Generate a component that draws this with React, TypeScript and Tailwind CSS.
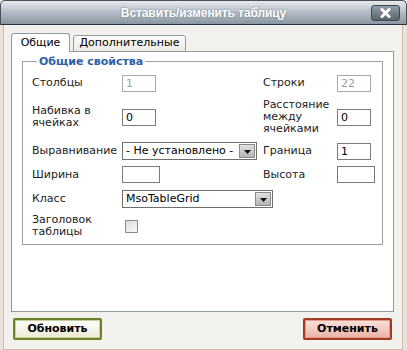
import React from "react";

function TextBox({ value = "", width = "w-[34px]", disabled = false }: { value?: string; width?: string; disabled?: boolean }) {
  return (
    <div
      className={`${width} h-[17px] border bg-white px-[3px] text-[11px] leading-[15px] ${
        disabled ? "border-[#a9a9a9] text-[#9a9a9a]" : "border-[#7b7b7b] text-black"
      }`}
    >
      {value}
    </div>
  );
}

function SelectBox({ value, width }: { value: string; width: string }) {
  return (
    <div className={`${width} h-[18px] border border-[#6f6f6f] bg-white flex items-center justify-between pl-[3px] pr-[1px]`}>
      <span className="text-[11px] leading-[14px] text-black whitespace-nowrap">{value}</span>
      <span className="w-[16px] h-[14px] bg-gradient-to-b from-[#e2e2e2] to-[#b4b4b4] border border-[#8a8a8a] flex items-end justify-center pb-[3px]">
        <svg width="7" height="4" viewBox="0 0 7 4">
          <path d="M0 0 H7 L3.5 4 Z" fill="#111" />
        </svg>
      </span>
    </div>
  );
}

const label = "text-[11px] leading-[12px] text-[#222] self-center";

export default function App() {
  return (
    <div className="w-[407px] h-[350px] bg-[#f3f1ee] flex flex-col font-['DejaVu_Sans',sans-serif] overflow-hidden">
      {/* Title bar */}
      <div className="h-[25px] shrink-0 rounded-t-[5px] border border-[#4a5259] border-b-[#2e3338] bg-gradient-to-b from-[#e6eaee] via-[#b3bcc6] to-[#8a96a2] flex items-center relative">
        <div className="flex-1 text-center text-white text-[12px] font-bold font-['Liberation_Sans',sans-serif] tracking-[-0.1px] [text-shadow:0_0_2px_#6b7784]">
          Вставить/изменить таблицу
        </div>
        <div className="absolute right-[6px] top-[4px] w-[29px] h-[16px] rounded-[3px] border border-[#3f4850] bg-gradient-to-b from-[#939da7] to-[#5a6570] flex items-center justify-center">
          <svg width="11" height="10" viewBox="0 0 11 10">
            <path d="M2 1.5 L9 8.5 M9 1.5 L2 8.5" stroke="#fff" strokeWidth="2.8" strokeLinecap="square" />
          </svg>
        </div>
      </div>

      {/* Body */}
      <div className="flex-1 flex flex-col border-l-[3px] border-r-[4px] border-[#ebe3da]">
        <div className="flex-1 flex flex-col border-x border-b border-[#cbbdaf] pt-[8px]">
          {/* Tabs */}
          <div className="flex items-end ml-[7px] h-[19px] gap-[3px] relative z-10">
            <div className="h-[19px] w-[59px] bg-white border border-[#919b9c] border-b-0 rounded-t-[3px] flex items-center justify-center text-[11px] text-black">
              Общие
            </div>
            <div className="h-[17px] w-[113px] bg-gradient-to-b from-[#fcfcfb] to-[#ecebe6] border border-[#919b9c] rounded-t-[3px] flex items-center justify-center text-[11px] text-black">
              Дополнительные
            </div>
          </div>

          {/* Panel */}
          <div className="ml-[7px] mr-[8px] -mt-px h-[261px] bg-white border border-[#919b9c] px-[10px] pt-[3px]">
            <fieldset className="border border-[#a0a0a0] pl-[9px] pt-[3px] pb-[3px]">
              <legend className="ml-[5px] px-[2px] text-[11px] leading-[13px] font-bold text-[#2b61a8]">
                Общие свойства
              </legend>
              <div className="grid grid-cols-[90px_141px_74px_1fr] grid-rows-[24px_44px_24px_23px_25px_30px]">
                <div className={label}>Столбцы</div>
                <div className="self-center"><TextBox value="1" disabled /></div>
                <div className={label}>Строки</div>
                <div className="self-center"><TextBox value="22" disabled /></div>

                <div className={label}>Набивка в<br />ячейках</div>
                <div className="self-center"><TextBox value="0" /></div>
                <div className={label}>Расстояние<br />между<br />ячейками</div>
                <div className="self-center"><TextBox value="0" /></div>

                <div className={label}>Выравнивание</div>
                <div className="self-center"><SelectBox value="- Не установлено -" width="w-[135px]" /></div>
                <div className={label}>Граница</div>
                <div className="self-center"><TextBox value="1" /></div>

                <div className={label}>Ширина</div>
                <div className="self-center"><TextBox width="w-[38px]" /></div>
                <div className={label}>Высота</div>
                <div className="self-center"><TextBox width="w-[38px]" /></div>

                <div className={label}>Класс</div>
                <div className="self-center col-span-3"><SelectBox value="MsoTableGrid" width="w-[151px]" /></div>

                <div className={label}>Заголовок<br />таблицы</div>
                <div className="self-center pl-[3px]">
                  <div className="w-[13px] h-[13px] border border-[#8c8c8c] bg-gradient-to-br from-[#dcdcdc] to-[#fafafa]" />
                </div>
                <div />
                <div />
              </div>
            </fieldset>
          </div>

          {/* Buttons */}
          <div className="flex justify-between pl-[9px] pr-[10px] mt-[6px]">
            <button className="w-[89px] h-[22px] rounded-[2px] border-2 border-[#6f7f2a] bg-gradient-to-b from-[#ffffff] to-[#ece9d2] text-[11px] font-bold text-black shadow-[inset_0_0_0_1px_#c7cf9a]">
              Обновить
            </button>
            <button className="w-[89px] h-[22px] rounded-[2px] border-2 border-[#a23b22] bg-gradient-to-b from-[#fbe3dc] to-[#e9b2a6] text-[11px] font-bold text-black shadow-[inset_0_0_0_1px_#e79a86]">
              Отменить
            </button>
          </div>
        </div>
      </div>
    </div>
  );
}
